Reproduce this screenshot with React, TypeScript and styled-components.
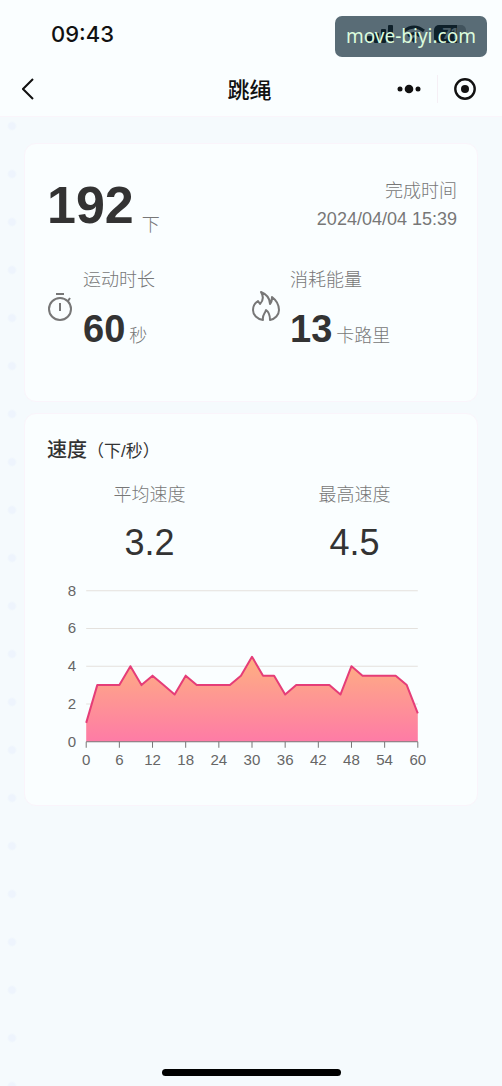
import React from 'react';
import styled, { createGlobalStyle } from 'styled-components';

const GlobalStyle = createGlobalStyle`
  * { box-sizing: border-box; }
  body {
    margin: 0;
    background: #f5fafd;
    color: #333;
    font-family: "Liberation Sans", "Noto Sans CJK SC", sans-serif;
  }
  h1, h2, p, dl, dt, dd { margin: 0; }
  button { padding: 0; border: 0; background: none; color: inherit; cursor: pointer; }
  svg { display: block; }
`;

const Page = styled.div`
  position: relative;
  display: flex;
  flex-direction: column;
  min-height: 100vh;
  background:
    radial-gradient(circle at 12px 12px, #eef4fd 3px, transparent 5px) 0 114px / 48px 48px repeat-y,
    #f5fafd;
`;

const Header = styled.header`
  background: #fafeff;
  color: #111;
  border-bottom: 1px solid #faf5fb;
`;

const StatusBar = styled.div`
  display: flex;
  justify-content: space-between;
  align-items: center;
  height: 68px;
  padding: 0 36px 0 51px;
`;

const Clock = styled.time`
  font: 500 22px/26px Inter, "Liberation Sans", sans-serif;
`;

const StatusIcons = styled.div`
  display: flex;
  align-items: center;
  gap: 8px;
  height: 20px;
`;

const Battery = styled.div`
  width: 32px;
  height: 18px;
  border-radius: 5px;
  background: linear-gradient(90deg, #000 72%, #aaa 72%);
  color: #ccc;
  font: 700 15px/18px Inter, sans-serif;
  text-align: center;
`;

const Watermark = styled.div`
  position: absolute;
  top: 16px;
  right: 15px;
  padding: 8px 11px;
  border-radius: 7px;
  background: rgba(20, 46, 60, 0.7);
  color: #dcfbdc;
  font: 19px/25px "Noto Sans", sans-serif;
`;

const NavBar = styled.nav`
  display: grid;
  grid-template-columns: 1fr auto 1fr;
  align-items: center;
  height: 48px;
  padding: 0 25px 6px 22px;
`;

const Title = styled.h1`
  padding-top: 4px;
  font-size: 22px;
  line-height: 32px;
  font-weight: 500;
`;

const NavActions = styled.div`
  display: flex;
  justify-content: flex-end;
  align-items: center;
  gap: 15px;
`;

const Divider = styled.span`
  width: 1px;
  height: 28px;
  background: #f5eff5;
`;

const Content = styled.main`
  display: flex;
  flex-direction: column;
  gap: 11px;
  padding: 26px 24px 0;
`;

const Card = styled.section<{ $bottom: number }>`
  padding: 22px 20px ${(p) => p.$bottom}px 22px;
  border: 1px solid #faf4fb;
  border-radius: 12px;
  background: #fafeff;
`;

const Summary = styled.div`
  display: flex;
  justify-content: space-between;
  padding-top: 11px;
`;

const Total = styled.p`
  display: flex;
  align-items: flex-end;
  gap: 8px;
`;

const TotalFigure = styled.strong`
  margin-bottom: 6px;
  font-size: 52px;
  line-height: 56px;
`;

const Muted = styled.span`
  color: #777;
  font-size: 18px;
  line-height: 28px;
  font-weight: 300;
`;

const Finished = styled.div`
  display: flex;
  flex-direction: column;
  align-items: flex-end;
`;

const Stats = styled.div`
  display: grid;
  grid-template-columns: 1fr 1fr;
  margin-top: 27px;
`;

const Stat = styled.div`
  display: flex;
  align-items: center;
  gap: 10px;

  > svg { margin-bottom: 6px; }
`;

const StatBody = styled.div`
  display: flex;
  flex-direction: column;
  gap: 13px;
`;

const Measure = styled.p`
  display: flex;
  align-items: baseline;
  gap: 4px;
`;

const StatFigure = styled.strong`
  font-size: 38px;
  line-height: 44px;
`;

const CardTitle = styled.h2`
  font-size: 20px;
  line-height: 28px;
  font-weight: 500;
`;

const TitleUnit = styled.span`
  font-size: 17px;
  font-weight: 400;
`;

const Speeds = styled.dl`
  display: grid;
  grid-template-columns: 1fr 1fr;
  margin-top: 15px;
  text-align: center;
`;

const SpeedValue = styled.dd`
  margin-top: 8px;
  font-size: 36px;
  line-height: 52px;
`;

const Chart = styled.svg`
  width: 100%;
  height: auto;
  margin-top: 10px;
  font-size: 15px;
  fill: #666;
`;

const HomeIndicator = styled.div`
  width: 179px;
  height: 7px;
  margin: auto auto 10px;
  border-radius: 4px;
  background: #000;
`;

const speeds = [
  1, 3, 3, 3, 4, 3, 3.5, 3, 2.5, 3.5, 3, 3, 3, 3, 3.5, 4.5,
  3.5, 3.5, 2.5, 3, 3, 3, 3, 2.5, 4, 3.5, 3.5, 3.5, 3.5, 3, 1.5,
];
const LEFT = 39;
const BASE = 162;
const px = (seconds: number) => LEFT + seconds * 5.5;
const py = (speed: number) => BASE - speed * 18.8;
const line = speeds.map((s, i) => `${px(i * 2)},${py(s)}`).join(' ');

function SpeedChart() {
  return (
    <Chart viewBox="0 0 408 197" role="img" aria-label="速度（下/秒）">
      <defs>
        <linearGradient id="fill" gradientUnits="userSpaceOnUse" x1="0" y1="78" x2="0" y2="162">
          <stop offset="0" stopColor="#feb081" />
          <stop offset="1" stopColor="#fe7ba6" />
        </linearGradient>
      </defs>
      {[2, 4, 6, 8].map((v) => (
        <line key={v} x1={LEFT} x2={px(60)} y1={py(v)} y2={py(v)} stroke="#e4e1dd" />
      ))}
      {[0, 2, 4, 6, 8].map((v) => (
        <text key={v} x="29" y={py(v) + 5} textAnchor="end">{v}</text>
      ))}
      <polygon points={`${px(0)},${BASE} ${line} ${px(60)},${BASE}`} fill="url(#fill)" />
      <polyline points={line} fill="none" stroke="#e53d78" strokeWidth="2" strokeLinejoin="round" />
      <path d={`M${LEFT} ${BASE}H${px(60)}`} stroke="#777" />
      {Array.from({ length: 11 }, (_, i) => i * 6).map((t) => (
        <React.Fragment key={t}>
          <path d={`M${px(t)} ${BASE}v6`} stroke="#777" />
          <text x={px(t)} y="185" textAnchor="middle">{t}</text>
        </React.Fragment>
      ))}
    </Chart>
  );
}

const Timer = () => (
  <svg width="26" height="30" viewBox="0 0 26 30" fill="none" stroke="#777" strokeWidth="2">
    <circle cx="13" cy="18" r="11" />
    <path d="M9 3h8M13 12v8M21 10l2-3" />
  </svg>
);

const Flame = () => (
  <svg width="28" height="32" viewBox="0 0 28 32" fill="none" stroke="#777" strokeWidth="2" strokeLinejoin="round">
    <path d="M11 30C5 29 1 25 1 20C1 16 3 13 6 11L8 14C11 11 12 7 9 2C14 4 18 8 18 14C20 12 20 10 20 7C24 10 27 14 27 20C27 25 23 29 18 30C18 26 17 22 14 20C13 24 10 25 11 30Z" />
  </svg>
);

export default function App() {
  return (
    <Page>
      <GlobalStyle />
      <Header>
        <StatusBar>
          <Clock>09:43</Clock>
          <StatusIcons>
            <svg width="27" height="18" viewBox="0 0 27 18" fill="#000">
              <rect y="11" width="5" height="7" rx="1" />
              <rect x="7" y="8" width="5" height="10" rx="1" />
              <rect x="14" y="4" width="5" height="14" rx="1" />
              <rect x="21" width="5" height="18" rx="1" />
            </svg>
            <svg width="24" height="18" viewBox="0 0 24 18" fill="none" stroke="#000" strokeWidth="3">
              <path d="M2 6q10-8 20 0M6 11q6-5 12 0" />
              <path d="M12 12l3 3-3 3-3-3z" fill="#000" stroke="none" />
            </svg>
            <Battery>71</Battery>
          </StatusIcons>
        </StatusBar>
        <NavBar>
          <button aria-label="返回">
            <svg width="12" height="22" viewBox="0 0 12 22" fill="none" stroke="#111" strokeWidth="2">
              <path d="M11 1L1 11l10 10" />
            </svg>
          </button>
          <Title>跳绳</Title>
          <NavActions>
            <button aria-label="更多">
              <svg width="26" height="24" viewBox="0 0 26 24" fill="#111">
                <circle cx="4" cy="12" r="2.5" />
                <circle cx="13" cy="12" r="4.3" />
                <circle cx="22" cy="12" r="2.5" />
              </svg>
            </button>
            <Divider />
            <button aria-label="关闭">
              <svg width="24" height="24" viewBox="0 0 24 24">
                <circle cx="12" cy="12" r="9.7" fill="none" stroke="#111" strokeWidth="2.4" />
                <circle cx="12" cy="12" r="4" fill="#111" />
              </svg>
            </button>
          </NavActions>
        </NavBar>
      </Header>
      <Watermark>move-biyi.com</Watermark>

      <Content>
        <Card $bottom={50}>
          <Summary>
            <Total>
              <TotalFigure>192</TotalFigure>
              <Muted>下</Muted>
            </Total>
            <Finished>
              <Muted>完成时间</Muted>
              <Muted as="time">2024/04/04 15:39</Muted>
            </Finished>
          </Summary>
          <Stats>
            <Stat>
              <Timer />
              <StatBody>
                <Muted>运动时长</Muted>
                <Measure>
                  <StatFigure>60</StatFigure>
                  <Muted>秒</Muted>
                </Measure>
              </StatBody>
            </Stat>
            <Stat>
              <Flame />
              <StatBody>
                <Muted>消耗能量</Muted>
                <Measure>
                  <StatFigure>13</StatFigure>
                  <Muted>卡路里</Muted>
                </Measure>
              </StatBody>
            </Stat>
          </Stats>
        </Card>

        <Card $bottom={28}>
          <CardTitle>
            速度<TitleUnit>（下/秒）</TitleUnit>
          </CardTitle>
          <Speeds>
            <div>
              <Muted as="dt">平均速度</Muted>
              <SpeedValue>3.2</SpeedValue>
            </div>
            <div>
              <Muted as="dt">最高速度</Muted>
              <SpeedValue>4.5</SpeedValue>
            </div>
          </Speeds>
          <SpeedChart />
        </Card>
      </Content>
      <HomeIndicator />
    </Page>
  );
}
